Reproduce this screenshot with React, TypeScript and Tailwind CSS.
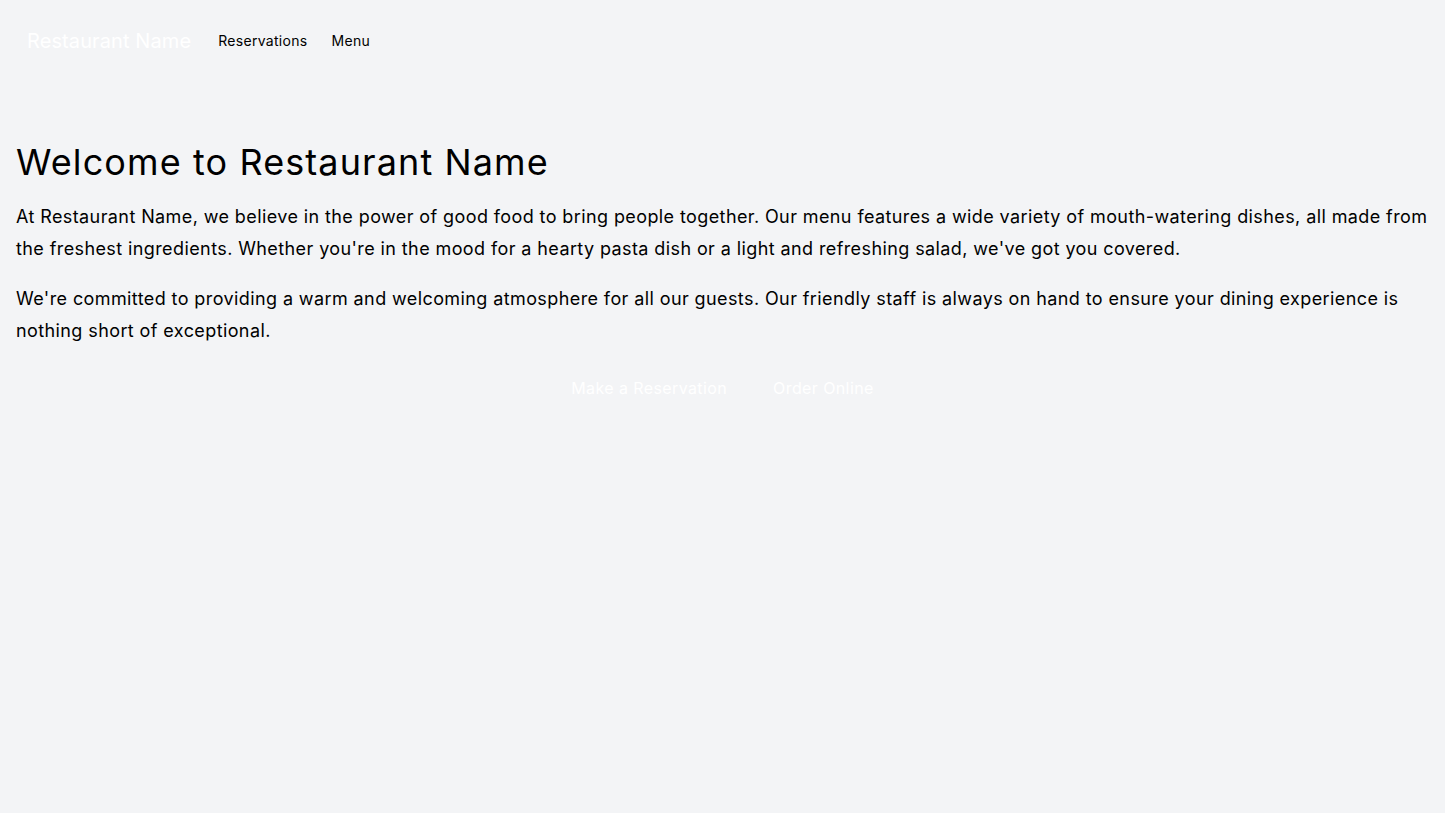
export default function App() {
  return (
    <div className="min-h-screen bg-gray-100 font-['Inter',sans-serif]">
      <nav className="flex items-center flex-wrap pl-[27px] pt-[27px] pb-[27px]">
        <span className="text-xl text-white mr-[27px] tracking-[0.1px]">Restaurant Name</span>
        <div className="flex text-sm tracking-[0.3px]">
          <a className="mr-6 text-black">Reservations</a>
          <a className="text-black">Menu</a>
        </div>
      </nav>
      <main className="px-4 pt-[60px]">
        <h1 className="text-4xl leading-10 mb-[19px] text-black tracking-[1.1px]">Welcome to Restaurant Name</h1>
        <p className="text-lg leading-8 mb-[18px] text-black tracking-[0.4px]">
          At Restaurant Name, we believe in the power of good food to bring people together. Our menu features a wide variety of mouth-watering dishes, all made from the freshest ingredients. Whether you're in the mood for a hearty pasta dish or a light and refreshing salad, we've got you covered.
        </p>
        <p className="text-lg leading-8 text-black tracking-[0.4px]">
          We're committed to providing a warm and welcoming atmosphere for all our guests. Our friendly staff is always on hand to ensure your dining experience is nothing short of exceptional.
        </p>
        <div className="flex justify-center gap-[14px] mt-[21px] tracking-[0.4px]">
          <a className="px-4 py-2 text-white">Make a Reservation</a>
          <a className="px-4 py-2 text-white">Order Online</a>
        </div>
      </main>
    </div>
  );
}
